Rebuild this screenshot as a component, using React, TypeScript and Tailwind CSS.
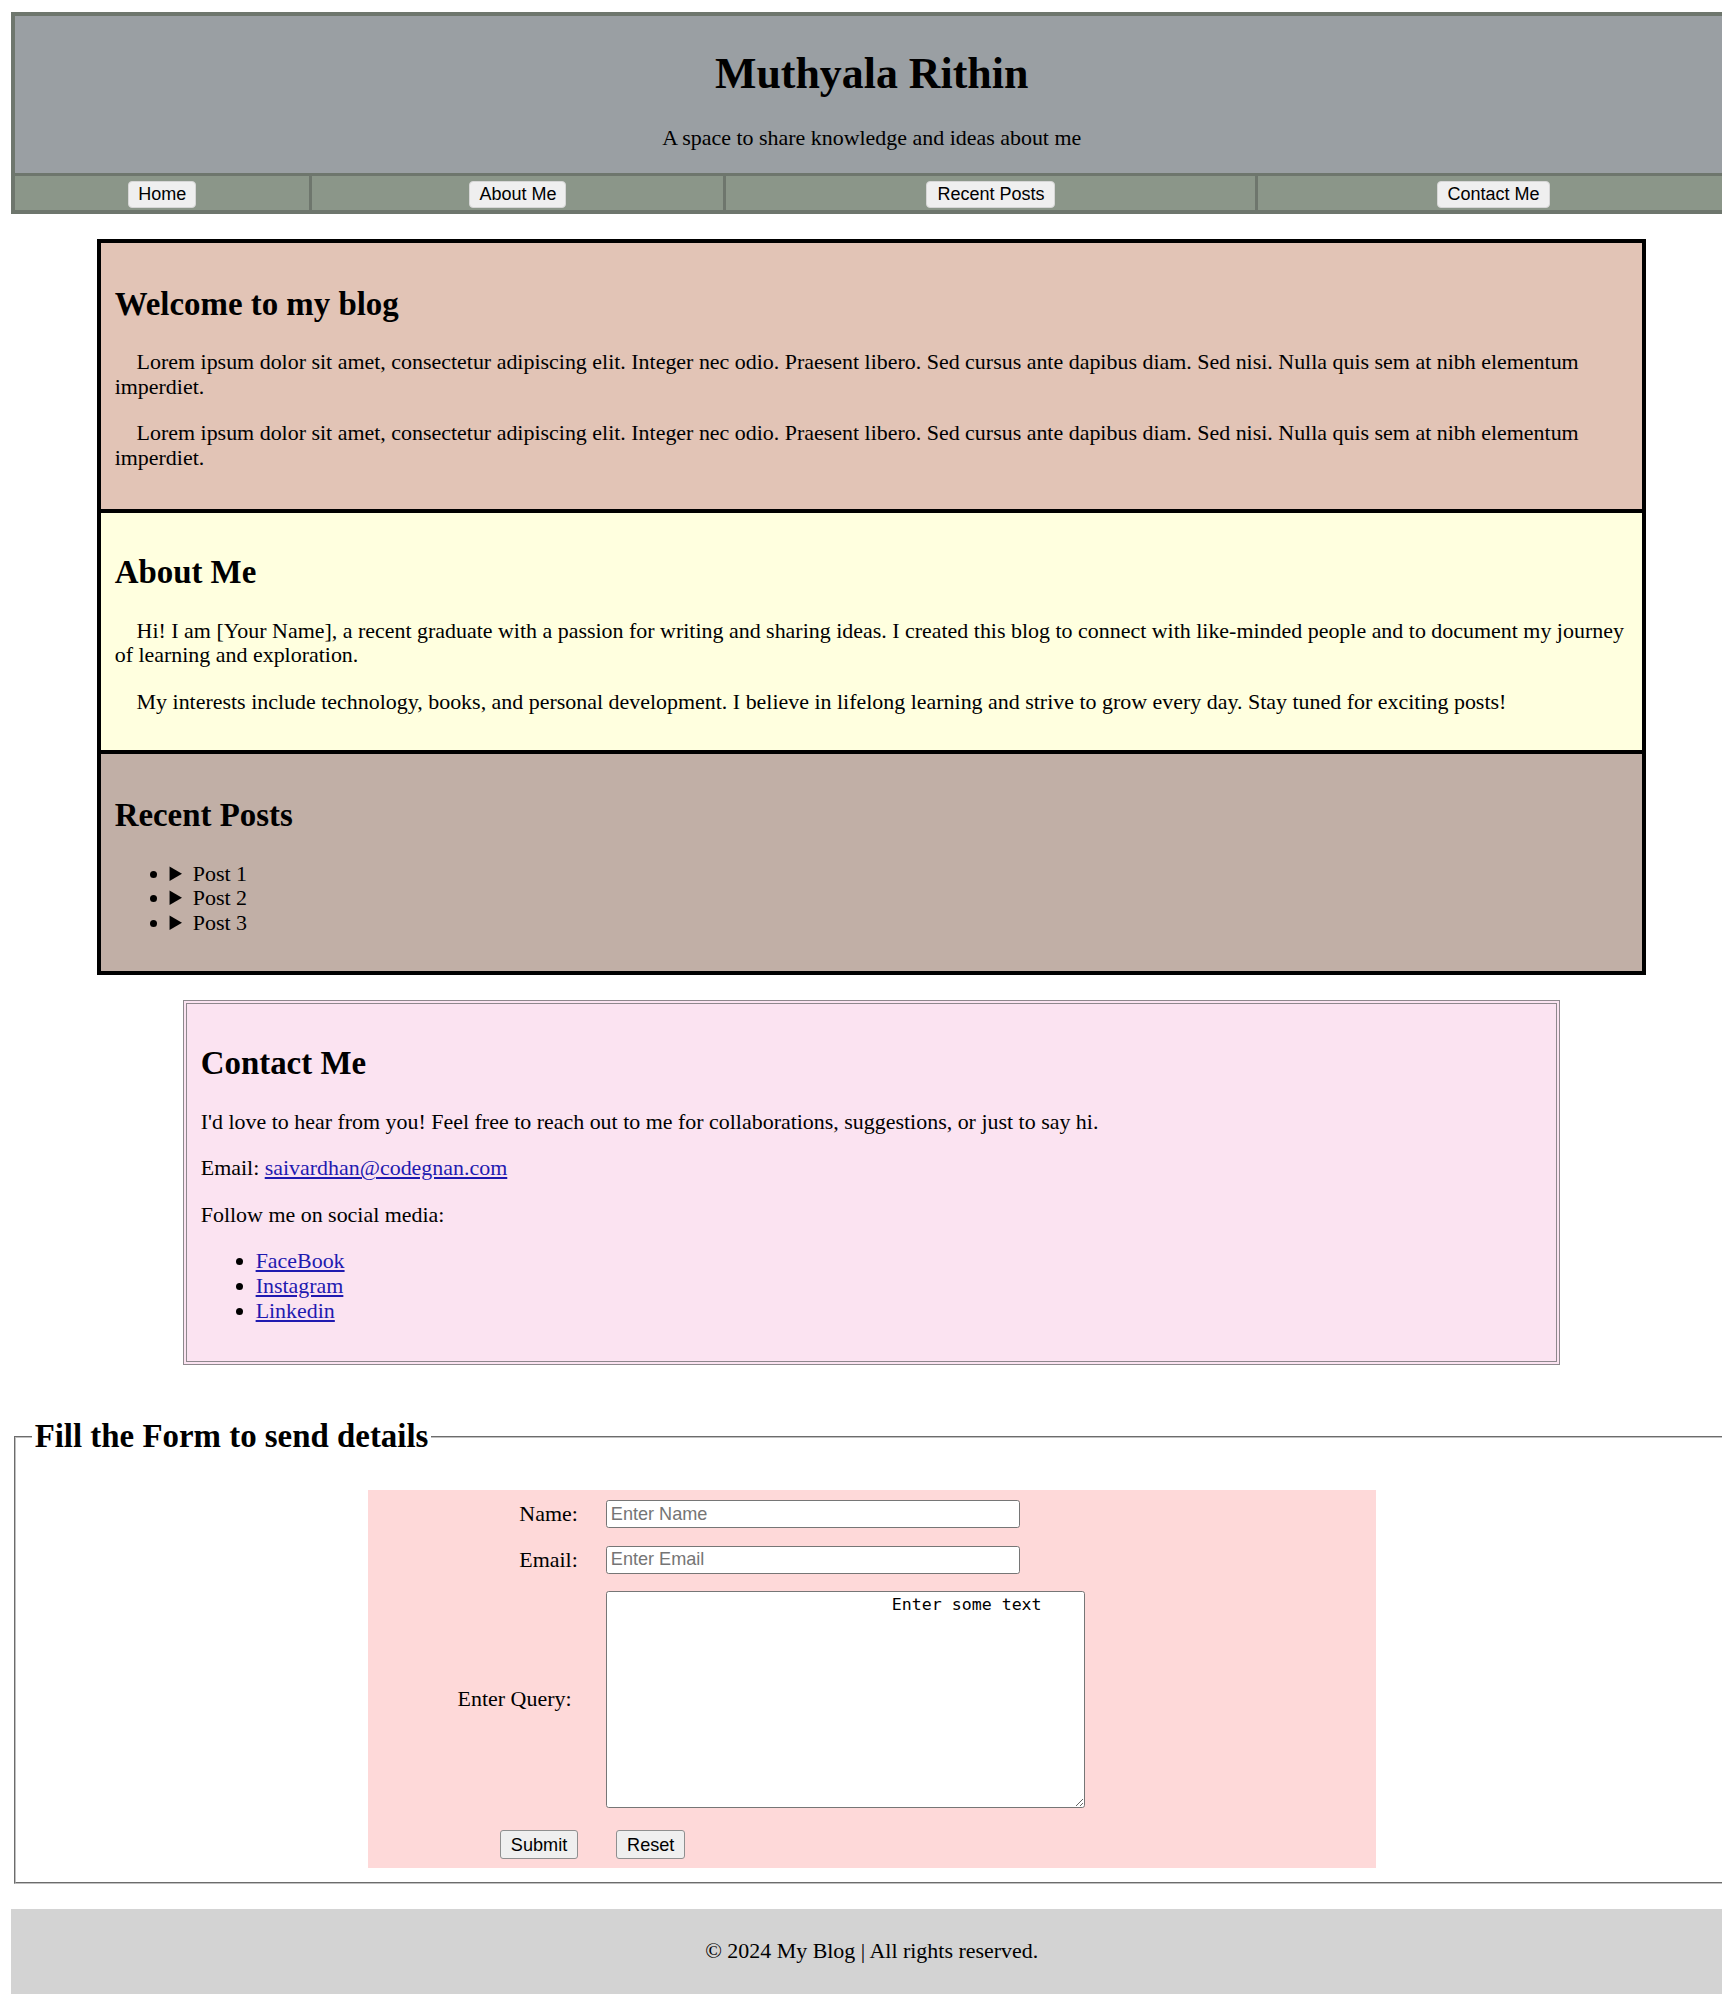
import React from "react";

const navBtn =
  "h-[27px] rounded-[4px] border border-[#d6d6d6] bg-[#efefef] font-['Liberation_Sans',Arial,sans-serif] text-[18px] leading-[25px] text-black";
const formBtn =
  "h-[28.3px] rounded-[3px] border border-[#8f8f8f] bg-[#efefef] font-['Liberation_Sans',Arial,sans-serif] text-[18.1px] leading-[26px] text-black";
const h2c = "text-[32.9px] font-bold leading-[37.5px] my-[27.1px]";
const pIndent = "my-[21.95px] indent-[21.95px]";

export default function App() {
  return (
    <div className="w-[1722px] overflow-hidden bg-white text-black font-['Liberation_Serif','Times_New_Roman',serif] text-[21.95px] leading-[24.6px]">
      <div className="w-[1743.4px] px-[10.9px] pt-[11.5px] pb-[11px]">
        {/* Header + nav */}
        <div className="border-[4px] border-[#6e766d]">
          <div className="bg-[#9a9fa3] pt-[32.2px] pb-[22.8px] text-center">
            <h1 className="text-[43.9px] font-bold leading-[50.5px]">Muthyala Rithin</h1>
            <p className="mt-[27.7px]">A space to share knowledge and ideas about me</p>
          </div>
          <div className="flex h-[36.3px] border-t-[3.3px] border-[#6e766d] bg-[#8b9689]">
            <div className="flex w-[294.6px] items-center justify-center pt-[3.5px]">
              <button className={`${navBtn} w-[68px]`}>Home</button>
            </div>
            <div className="flex w-[414px] items-center justify-center border-l-[3px] border-[#6e766d] pt-[3.5px]">
              <button className={`${navBtn} w-[97px]`}>About Me</button>
            </div>
            <div className="flex w-[532px] items-center justify-center border-l-[3px] border-[#6e766d] pt-[3.5px]">
              <button className={`${navBtn} w-[129px]`}>Recent Posts</button>
            </div>
            <div className="flex flex-1 items-center justify-center border-l-[3px] border-[#6e766d] pt-[3.5px]">
              <button className={`${navBtn} w-[113px]`}>Contact Me</button>
            </div>
          </div>
        </div>

        {/* Main sections */}
        <div className="mx-auto mt-[25.9px] w-[90%] border-[4px] border-black">
          <section className="flow-root bg-[#e2c4b6] px-[13.7px] pt-[15.2px] pb-[16.2px]">
            <h2 className={h2c}>Welcome to my blog</h2>
            <p className={pIndent}>
              Lorem ipsum dolor sit amet, consectetur adipiscing elit. Integer nec odio. Praesent libero. Sed cursus ante dapibus diam. Sed nisi. Nulla quis sem at nibh elementum imperdiet.
            </p>
            <p className={pIndent}>
              Lorem ipsum dolor sit amet, consectetur adipiscing elit. Integer nec odio. Praesent libero. Sed cursus ante dapibus diam. Sed nisi. Nulla quis sem at nibh elementum imperdiet.
            </p>
          </section>
          <section className="flow-root border-t-[4px] border-black bg-[#ffffdf] px-[13.7px] pt-[14.2px] pb-[14.2px]">
            <h2 className={h2c}>About Me</h2>
            <p className={pIndent}>
              Hi! I am [Your Name], a recent graduate with a passion for writing and sharing ideas. I created this blog to connect with like-minded people and to document my journey of learning and exploration.
            </p>
            <p className={pIndent}>
              My interests include technology, books, and personal development. I believe in lifelong learning and strive to grow every day. Stay tuned for exciting posts!
            </p>
          </section>
          <section className="flow-root border-t-[4px] border-black bg-[#c1afa6] px-[13.7px] pt-[15.7px] pb-[13.9px]">
            <h2 className={h2c}>Recent Posts</h2>
            <ul className="my-[21.95px] list-disc pl-[54.9px]">
              <li>
                <details>
                  <summary>Post 1</summary>
                </details>
              </li>
              <li>
                <details>
                  <summary>Post 2</summary>
                </details>
              </li>
              <li>
                <details>
                  <summary>Post 3</summary>
                </details>
              </li>
            </ul>
          </section>
        </div>

        {/* Contact */}
        <div className="mx-auto mt-[25px] flow-root w-[80%] border-[4.5px] border-double border-[#8e888d] bg-[#fbe3f1] px-[13.7px] pt-[13.7px] pb-[16.2px]">
          <h2 className={h2c}>Contact Me</h2>
          <p className="my-[21.95px]">
            I'd love to hear from you! Feel free to reach out to me for collaborations, suggestions, or just to say hi.
          </p>
          <p className="my-[21.95px]">
            Email:{" "}
            <a href="#" className="text-[#1f1ab0] underline">
              saivardhan@codegnan.com
            </a>
          </p>
          <p className="my-[21.95px]">Follow me on social media:</p>
          <ul className="my-[21.95px] list-disc pl-[54.9px]">
            <li>
              <a href="#" className="text-[#1f1ab0] underline">FaceBook</a>
            </li>
            <li>
              <a href="#" className="text-[#1f1ab0] underline">Instagram</a>
            </li>
            <li>
              <a href="#" className="text-[#1f1ab0] underline">Linkedin</a>
            </li>
          </ul>
        </div>

        {/* Form */}
        <fieldset className="mx-[2.72px] mt-[25.5px] border-[2.72px] border-[#c0c0c0] px-[16.3px] pt-[7px] pb-[13.6px] [border-style:groove]">
          <legend className="px-[2.72px] py-[27.1px]">
            <h2 className="text-[32.9px] font-bold leading-[37.5px]">Fill the Form to send details</h2>
          </legend>
          <div className="mx-auto w-[60%] bg-[#fed9d9] pt-[10.7px] pb-[9.4px]">
            <div className="flex items-center">
              <label className="w-[210px] text-right">Name:</label>
              <input
                type="text"
                placeholder="Enter Name"
                className="ml-[28px] h-[28px] w-[414.6px] rounded-[2.7px] border border-[#767676] bg-white px-[4px] font-['Liberation_Sans',Arial,sans-serif] text-[18.1px] text-black placeholder:text-[#757575]"
              />
            </div>
            <div className="mt-[17.6px] flex items-center">
              <label className="w-[210px] text-right">Email:</label>
              <input
                type="email"
                placeholder="Enter Email"
                className="ml-[28px] h-[28px] w-[414.6px] rounded-[2.7px] border border-[#767676] bg-white px-[4px] font-['Liberation_Sans',Arial,sans-serif] text-[18.1px] text-black placeholder:text-[#757575]"
              />
            </div>
            <div className="mt-[17.4px] flex items-center">
              <label className="w-[210px] pr-[6.3px] text-right">Enter Query:</label>
              <textarea
                defaultValue={"                            Enter some text"}
                className="ml-[28px] h-[216.6px] w-[479px] resize rounded-[2.7px] border border-[#767676] bg-white py-[2.7px] pr-[2.7px] pl-[5.2px] font-['DejaVu_Sans_Mono',monospace] text-[16.6px] leading-[19.4px] text-black"
              />
            </div>
            <div className="mt-[22.7px] flex items-center">
              <div className="flex w-[210px] justify-end">
                <button className={`${formBtn} w-[77.6px]`}>Submit</button>
              </div>
              <button className={`${formBtn} ml-[38.6px] w-[68.6px]`}>Reset</button>
            </div>
          </div>
        </fieldset>

        {/* Footer */}
        <footer className="mt-[25.5px] bg-[#d3d3d3] py-[30.2px] text-center">
          © 2024 My Blog | All rights reserved.
        </footer>
      </div>
    </div>
  );
}
